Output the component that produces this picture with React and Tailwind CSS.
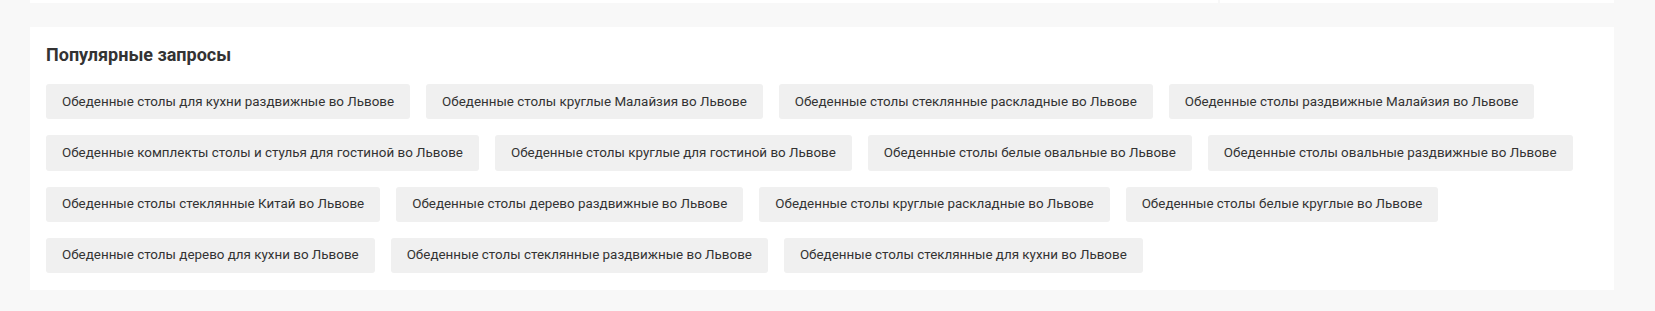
const QUERIES = [
  'Обеденные столы для кухни раздвижные во Львове',
  'Обеденные столы круглые Малайзия во Львове',
  'Обеденные столы стеклянные раскладные во Львове',
  'Обеденные столы раздвижные Малайзия во Львове',
  'Обеденные комплекты столы и стулья для гостиной во Львове',
  'Обеденные столы круглые для гостиной во Львове',
  'Обеденные столы белые овальные во Львове',
  'Обеденные столы овальные раздвижные во Львове',
  'Обеденные столы стеклянные Китай во Львове',
  'Обеденные столы дерево раздвижные во Львове',
  'Обеденные столы круглые раскладные во Львове',
  'Обеденные столы белые круглые во Львове',
  'Обеденные столы дерево для кухни во Львове',
  'Обеденные столы стеклянные раздвижные во Львове',
  'Обеденные столы стеклянные для кухни во Львове',
]

export default function App() {
  return (
    <div className="w-[1655px] h-[311px] bg-[#f8f8f8] font-['Roboto',_'Noto_Sans',_sans-serif] overflow-hidden">
      {/* bottom edges of the cards above */}
      <div className="flex gap-[2px] ml-[30px] w-[1584px] h-[3px]">
        <div className="flex-1 bg-white" />
        <div className="w-[394px] bg-white" />
      </div>

      {/* popular queries */}
      <div className="ml-[30px] mt-[24px] w-[1584px] bg-white px-[16px] pt-[17px] pb-[17px]">
        <h3 className="text-[18px] leading-[21px] font-bold text-[#333] mb-[19px]">
          Популярные запросы
        </h3>
        <div className="flex flex-wrap gap-x-[16px] gap-y-[16px]">
          {QUERIES.map((q) => (
            <a
              key={q}
              href="#"
              className="h-[35.3px] flex items-center px-[16px] rounded-[3px] bg-[#f0f0f0] text-[13.4px] text-[#333] whitespace-nowrap"
            >
              {q}
            </a>
          ))}
        </div>
      </div>
    </div>
  )
}
